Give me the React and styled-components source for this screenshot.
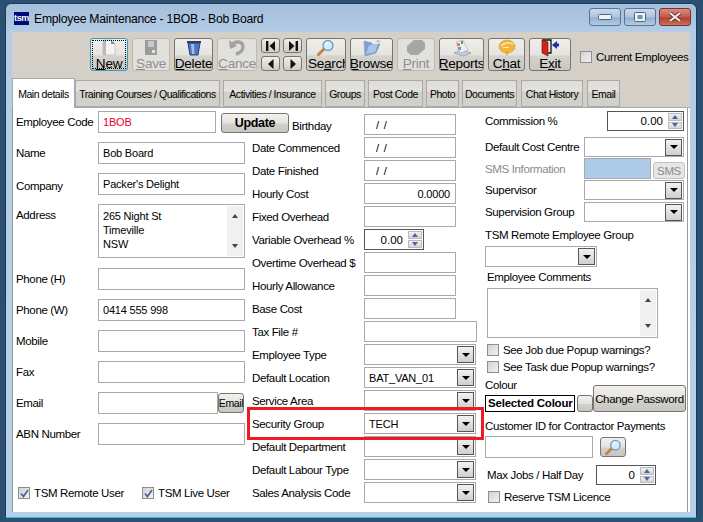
import React from "react";
import styled, { createGlobalStyle } from "styled-components";

const GlobalStyle = createGlobalStyle`
  html, body {
    margin: 0;
    padding: 0;
    background: #2b5072;
    font-family: "Liberation Sans", Arial, sans-serif;
    font-size: 11.5px;
    letter-spacing: -0.35px;
    color: #000;
    overflow: hidden;
  }
`;

const NewIcon = () => (
  <svg width="18" height="17" viewBox="0 0 18 17">
    <path d="M3 1h8l4 4v11H3z" fill="#f4f4f4" stroke="#c4c4c4" />
    <path d="M11 1v4h4z" fill="#8c8c8c" />
    <path d="M3 1h3v15H3z" fill="#b9b9b9" />
  </svg>
);
const SaveIcon = () => (
  <svg width="16" height="17" viewBox="0 0 16 17">
    <path d="M2 1h12v15H2z" fill="#9c9c9c" />
    <path d="M5 2h6v6H5z" fill="#c9c9c9" />
    <path d="M9 11h3v3H9z" fill="#e2e2e2" />
  </svg>
);
const TrashIcon = () => (
  <svg width="16" height="17" viewBox="0 0 16 17">
    <path d="M1 2h14v2H1z" fill="#333f66" />
    <path d="M2 4h12l-2 12H4z" fill="#4d76c4" stroke="#2a3f78" />
    <path d="M5 5h3l.5 10H6z" fill="#9cc0ee" />
  </svg>
);
const UndoIcon = () => (
  <svg width="18" height="17" viewBox="0 0 18 17">
    <path d="M3 7c4-6 12-5 12 1 0 3-3 6-7 7" fill="none" stroke="#a2a2a2" strokeWidth="3.4" />
    <path d="M1 1l1 9 7-3z" fill="#a2a2a2" />
  </svg>
);
const NavIcon = ({ dir, bar }) => (
  <svg width="12" height="12" viewBox="0 0 12 12">
    <g transform={dir === "left" ? "" : "matrix(-1 0 0 1 12 0)"}>
      {bar && <path d="M1 1h2.4v10H1z" fill="#111" />}
      <path d={bar ? "M10 1v10L4.5 6z" : "M8.5 1v10L3 6z"} fill="#111" />
    </g>
  </svg>
);
const SearchIcon = ({ size = 18 }) => (
  <svg width={size} height={size} viewBox="0 0 18 18">
    <path d="M7.5 9.5L1.5 15.5" stroke="#c9803a" strokeWidth="3" strokeLinecap="round" />
    <circle cx="11" cy="6.5" r="5" fill="#d3ecfb" stroke="#6b9ec6" strokeWidth="1.4" />
    <path d="M8.5 6a3 3 0 0 1 2.5-2.6" stroke="#fff" strokeWidth="1.2" fill="none" />
  </svg>
);
const BrowseIcon = () => (
  <svg width="22" height="17" viewBox="0 0 22 17">
    <path d="M3 2l8 2 0 2 8-1-4 9-11 3z" fill="#7f9fd0" stroke="#8d9aae" strokeWidth=".6" />
    <path d="M5 15l3-9 9-1-3 8z" fill="#a9c6ee" />
    <path d="M15 1l5 1-3 2z" fill="#aebccb" />
  </svg>
);
const PrintIcon = () => (
  <svg width="20" height="17" viewBox="0 0 20 17">
    <path d="M1 7l7-6h8l3 3v6l-7 6H5l-4-3z" fill="#a6a6a6" />
  </svg>
);
const ReportsIcon = () => (
  <svg width="20" height="18" viewBox="0 0 20 18">
    <path d="M2 14l8-3 9 3-8 3z" fill="#c9c9d8" stroke="#8a8a9c" strokeWidth=".6" />
    <path d="M4 3l7-2 5 10-8 3z" fill="#e9eef7" stroke="#a5abc0" strokeWidth=".6" />
    <path d="M5 4h3v3H5z" fill="#d88b4a" />
    <path d="M9 2h2v3H9z" fill="#5d9e5a" />
    <path d="M6 8h3v3H6z" fill="#6f94d6" />
  </svg>
);
const ChatIcon = () => (
  <svg width="18" height="18" viewBox="0 0 18 18">
    <ellipse cx="9" cy="7.5" rx="8" ry="6.5" fill="#f0b53a" stroke="#d8962a" strokeWidth=".6" />
    <path d="M7 13l2 4 2-4z" fill="#e6a62f" />
    <path d="M3 7c2-3 8-4 12-2" stroke="#fbe2a0" strokeWidth="1.6" fill="none" />
    <path d="M5 8.5h6" stroke="#fff2c9" strokeWidth="1" />
  </svg>
);
const ExitIcon = () => (
  <svg width="20" height="18" viewBox="0 0 20 18">
    <path d="M2 1h9v13H8" fill="none" stroke="#111" strokeWidth="1.3" />
    <path d="M2 1l6 2v14l-6-3z" fill="#d8201c" stroke="#5a1010" strokeWidth=".6" />
    <path d="M12 6l5-4v2.5h2v3h-2V10z" fill="#1c2fa8" />
  </svg>
);
const CheckMark = () => (
  <svg width="9" height="9" viewBox="0 0 9 9">
    <path d="M1 4.5l2.4 3L8 1" fill="none" stroke="#4a5f9e" strokeWidth="1.7" />
  </svg>
);

const Desktop = styled.div`
  width: 703px;
  height: 522px;
  padding: 3px 0 0 5px;
  box-sizing: border-box;
`;

const Window = styled.div`
  width: 692px;
  height: 515px;
  box-sizing: border-box;
  border: 1px solid #1b3a55;
  border-bottom: 1px solid #21c0e0;
  border-radius: 6px 6px 0 0;
  background: linear-gradient(to bottom, #a3bfdb 0, #b4cce6 28px, #b8d0ea 100%);
  padding: 0 6px 5px 6px;
  display: flex;
  flex-direction: column;
`;

const TitleBar = styled.div`
  height: 28px;
  display: flex;
  align-items: center;
  padding-top: 1px;
  box-sizing: border-box;
`;

const Logo = styled.div`
  width: 15px;
  height: 13px;
  background: #000a78;
  color: #fff;
  font: bold 9px "Liberation Sans", sans-serif;
  line-height: 13px;
  text-align: center;
  margin: 0 5px 0 2px;
  overflow: hidden;
`;

const TitleText = styled.span`
  flex: 1;
  font-size: 12.2px;
  letter-spacing: -0.25px;
`;

const WinControls = styled.div`
  display: flex;
  gap: 3px;
  margin: -4px -1px 0 0;
`;

const WinButton = styled.div`
  width: 30px;
  height: 16px;
  border: 1px solid ${p => (p.$close ? "#7c342a" : "#5a7390")};
  border-radius: 3px;
  display: flex;
  align-items: center;
  justify-content: center;
  background: ${p =>
    p.$close
      ? "linear-gradient(to bottom, #d98a7e 0, #c25a4a 50%, #b2402e 55%, #c9705c 100%)"
      : "linear-gradient(to bottom, #c9daec 0, #aec5de 50%, #94b0ce 55%, #b3cbe4 100%)"};
`;

const Client = styled.div`
  flex: 1;
  display: flex;
  flex-direction: column;
  width: 678px;
`;

const Toolbar = styled.div`
  height: 48px;
  box-sizing: border-box;
  display: flex;
  gap: 4px;
  padding: 6px 0 0 78px;
  background: #d4d0c8;
`;

const ToolButton = styled.div`
  width: ${p => p.$w}px;
  height: 33px;
  box-sizing: border-box;
  flex-shrink: 0;
  border: 1px solid ${p => (p.$focus ? "#3b98bd" : p.$off ? "#bdbab3" : "#77756f")};
  border-radius: 3px;
  background: ${p =>
    p.$off
      ? "#e2e0da"
      : "linear-gradient(to bottom, #efeeea 0, #e6e4df 50%, #d5d3cd 55%, #c9c7c1 100%)"};
  color: ${p => (p.$off ? "#8f8f8f" : "#000")};
  display: flex;
  flex-direction: column;
  align-items: ${p => (p.$clip ? "flex-start" : "center")};
  overflow: hidden;
  font-size: 13.6px;
  letter-spacing: -0.3px;
  line-height: 15px;
  white-space: nowrap;
  outline: ${p => (p.$focus ? "1px dotted #000" : "none")};
  outline-offset: -3px;
`;

const IconSlot = styled.div`
  height: 17px;
  width: 100%;
  display: flex;
  align-items: center;
  justify-content: center;
  flex-shrink: 0;
`;

const ToolLabel = styled.span`
  padding-left: ${p => (p.$clip ? 1 : 0)}px;
`;

const NavGrid = styled.div`
  display: grid;
  grid-template-columns: 19px 19px;
  grid-template-rows: 15px 15px;
  gap: 3px;
  flex-shrink: 0;
`;

const NavButton = styled.div`
  border: 1px solid #77756f;
  border-radius: 3px;
  box-sizing: border-box;
  background: linear-gradient(to bottom, #efeeea, #d0cec8);
  display: flex;
  align-items: center;
  justify-content: center;
`;

const CurrentBox = styled.label`
  display: flex;
  align-items: center;
  gap: 4px;
  margin: 12px 0 0 5px;
  height: 14px;
  white-space: nowrap;
`;

const Tabs = styled.div`
  height: 27px;
  display: flex;
  align-items: flex-end;
  font-size: 10.5px;
  letter-spacing: -0.45px;
  position: relative;
  z-index: 1;
  background: #d4d0c8;
`;

const Tab = styled.div`
  box-sizing: border-box;
  width: ${p => p.$w}px;
  margin-left: ${p => p.$gap || 0}px;
  height: ${p => (p.$active ? 30 : 27)}px;
  margin-bottom: ${p => (p.$active ? -1 : 0)}px;
  border: 1px solid #a9a9a9;
  border-bottom: ${p => (p.$active ? "none" : "1px solid #a9a9a9")};
  background: ${p =>
    p.$active ? "#fff" : "linear-gradient(to bottom, #dedcd6 0, #e4e2dd 40%, #d2d0ca 45%, #d2d0ca 100%)"};
  display: flex;
  align-items: center;
  justify-content: center;
  white-space: nowrap;
`;

const Page = styled.div`
  position: relative;
  flex: 1;
  width: 678px;
  box-sizing: border-box;
  background: linear-gradient(to right, #fff 674px, #9a9a9a 674px, #9a9a9a 675px, #fff 675px);
  border-left: 1px solid #9a9a9a;
  border-top: 1px solid #a9a9a9;
  display: grid;
  grid-template-columns: 236px 233px 1fr;
  padding: 3px 0 0 3px;
  align-items: start;
`;

const LeftColumn = styled.div`
  display: flex;
  flex-direction: column;
  gap: 9px;
`;

const MiddleColumn = styled.div`
  display: flex;
  flex-direction: column;
  gap: 2px;
  padding-top: 3px;
`;

const RightColumn = styled.div`
  display: flex;
  flex-direction: column;
`;

const Row = styled.div`
  display: flex;
  align-items: ${p => (p.$top ? "flex-start" : "center")};
  height: ${p => p.$h}px;
  margin-top: ${p => p.$mt || 0}px;
  flex-shrink: 0;
`;

const Label = styled.div`
  width: ${p => p.$w}px;
  flex-shrink: 0;
  white-space: nowrap;
  padding-left: ${p => p.$indent || 0}px;
  padding-top: ${p => p.$down || 0}px;
  box-sizing: border-box;
  color: ${p => (p.$muted ? "#8a8a8a" : "#000")};
`;

const Caption = styled.div`
  height: 14px;
  line-height: 14px;
  white-space: nowrap;
  margin-top: ${p => p.$mt || 0}px;
  margin-left: ${p => p.$ml || 0}px;
`;

const Field = styled.div`
  width: ${p => p.$w}px;
  height: ${p => p.$h || 22}px;
  box-sizing: border-box;
  flex-shrink: 0;
  border: 1px solid #a9a9a9;
  padding: 0 ${p => (p.$right ? 5 : 4)}px;
  display: flex;
  align-items: center;
  justify-content: ${p => (p.$right ? "flex-end" : "flex-start")};
  color: ${p => p.$color || "#000"};
  background: #fff;
  font-size: 11px;
  letter-spacing: -0.2px;
  white-space: nowrap;
`;

const DateValue = styled.span`
  padding-left: 7px;
  word-spacing: 2px;
`;

const Memo = styled.div`
  width: ${p => p.$w}px;
  height: ${p => p.$h}px;
  box-sizing: border-box;
  border: 1px solid #a9a9a9;
  flex-shrink: 0;
  display: flex;
  justify-content: space-between;
  margin-left: ${p => p.$ml || 0}px;
  margin-top: ${p => p.$mt || 0}px;
  font-size: 11px;
  letter-spacing: -0.2px;
  line-height: 14px;
`;

const MemoText = styled.div`
  padding: 4px;
`;

const Scrollbar = styled.div`
  width: 16px;
  margin: 1px;
  background: #f0f0f0;
  display: flex;
  flex-direction: column;
  justify-content: space-between;
  align-items: center;
  padding: 8px 0;
  box-sizing: border-box;
`;

const Arrow = styled.span`
  width: 0;
  height: 0;
  border-left: 3.5px solid transparent;
  border-right: 3.5px solid transparent;
  ${p => (p.$up ? "border-bottom" : "border-top")}: 4px solid #444;
`;

const ComboBox = styled.div`
  width: ${p => p.$w}px;
  height: ${p => p.$h || 21}px;
  box-sizing: border-box;
  border: 1px solid #a9a9a9;
  flex-shrink: 0;
  display: flex;
  align-items: center;
  justify-content: space-between;
  padding: 0 1px 0 4px;
  font-size: 11px;
  letter-spacing: -0.2px;
  background: #fff;
`;

const ComboArrow = styled.div`
  width: 17px;
  height: 17px;
  box-sizing: border-box;
  border: 1px solid #555;
  background: linear-gradient(to bottom, #f2f2f2, #cfcfcf);
  display: flex;
  align-items: center;
  justify-content: center;
`;

const ComboTriangle = styled.span`
  width: 0;
  height: 0;
  border-left: 4px solid transparent;
  border-right: 4px solid transparent;
  border-top: 4px solid #000;
`;

const Spin = styled.div`
  width: ${p => p.$w}px;
  height: ${p => p.$h || 21}px;
  box-sizing: border-box;
  border: 1px solid #555;
  flex-shrink: 0;
  display: flex;
  justify-content: flex-end;
  align-items: center;
  padding-left: 4px;
  font-size: 11.5px;
  letter-spacing: 0;
`;

const SpinValue = styled.span`
  margin-right: 5px;
`;

const SpinButtons = styled.div`
  width: 14px;
  align-self: stretch;
  margin: 1px 1px 1px 0;
  display: flex;
  flex-direction: column;
  gap: 1px;
`;

const SpinButton = styled.div`
  flex: 1;
  background: linear-gradient(to bottom, #f0f0f0, #d6d6d6);
  border: 1px solid #bbb;
  display: flex;
  align-items: center;
  justify-content: center;
`;

const SpinArrow = styled.span`
  width: 0;
  height: 0;
  border-left: 3.5px solid transparent;
  border-right: 3.5px solid transparent;
  ${p => (p.$up ? "border-bottom" : "border-top")}: 4px solid #4a64a8;
`;

const Button = styled.div`
  width: ${p => p.$w}px;
  height: ${p => p.$h}px;
  box-sizing: border-box;
  flex-shrink: 0;
  margin-left: ${p => p.$ml || 0}px;
  margin-top: ${p => p.$mt || 0}px;
  border: 1px solid ${p => (p.$off ? "#c2c2c2" : "#77756f")};
  border-radius: 3px;
  background: ${p =>
    p.$off ? "#e6e6e6" : "linear-gradient(to bottom, #f2f1ed 0, #e4e2dd 50%, #d2d0ca 55%, #c8c6c0 100%)"};
  color: ${p => (p.$off ? "#8a8a8a" : "#000")};
  font-size: ${p => p.$size || 11.5}px;
  font-weight: ${p => (p.$bold ? "bold" : "normal")};
  display: flex;
  align-items: center;
  justify-content: center;
  white-space: nowrap;
`;

const Box = styled.span`
  width: 12px;
  height: 12px;
  box-sizing: border-box;
  flex-shrink: 0;
  border: 1px solid #8e8e8e;
  background: linear-gradient(135deg, #d2d2d2, #f2f2f2);
  display: flex;
  align-items: center;
  justify-content: center;
`;

const CheckRow = styled.label`
  display: flex;
  align-items: center;
  gap: 4px;
  white-space: nowrap;
  height: 12px;
  margin-top: ${p => p.$mt || 0}px;
  margin-left: ${p => p.$ml || 0}px;
  width: ${p => p.$w || "auto"};
`;

const ChecksLine = styled.div`
  display: flex;
  margin-top: 33px;
  padding-left: 2px;
`;

const SmsBox = styled.div`
  width: 67px;
  height: 21px;
  background: #aecbe9;
  border: 1px solid #a9a9a9;
  box-sizing: border-box;
  flex-shrink: 0;
`;

const ColourRow = styled.div`
  display: flex;
  align-items: flex-end;
  margin-top: 5px;
  height: 34px;
`;

const ColourColumn = styled.div`
  display: flex;
  flex-direction: column;
  width: 108px;
`;

const ColourPick = styled.div`
  display: flex;
  align-items: center;
  height: 17px;
  margin-top: 3px;
`;

const SelectedColour = styled.div`
  width: 90px;
  height: 17px;
  box-sizing: border-box;
  border: 1px solid #000;
  font-weight: bold;
  letter-spacing: -0.2px;
  line-height: 15px;
  padding-left: 2px;
  white-space: nowrap;
  overflow: hidden;
`;

const Highlight = styled.div`
  position: absolute;
  left: 234px;
  top: 299px;
  width: 237px;
  height: 33px;
  box-sizing: border-box;
  border: 3px solid #ed1c24;
  pointer-events: none;
`;

const Combo = ({ w, h, children }) => (
  <ComboBox $w={w} $h={h}>
    <span>{children}</span>
    <ComboArrow>
      <ComboTriangle />
    </ComboArrow>
  </ComboBox>
);

const Spinner = ({ w, h, value }) => (
  <Spin $w={w} $h={h}>
    <SpinValue>{value}</SpinValue>
    <SpinButtons>
      <SpinButton>
        <SpinArrow $up />
      </SpinButton>
      <SpinButton>
        <SpinArrow />
      </SpinButton>
    </SpinButtons>
  </Spin>
);

const Check = ({ checked, label, ...rest }) => (
  <CheckRow {...rest}>
    <Box>{checked && <CheckMark />}</Box>
    {label}
  </CheckRow>
);

const tools = [
  { id: "new", w: 38, focus: true, icon: <NewIcon />, label: <><u>N</u>ew</> },
  { id: "save", w: 38, off: true, icon: <SaveIcon />, label: <><u>S</u>ave</> },
  { id: "delete", w: 39, icon: <TrashIcon />, label: <><u>D</u>elete</> },
  { id: "cancel", w: 40, off: true, icon: <UndoIcon />, label: <><u>C</u>ance</> },
];

const tools2 = [
  { id: "search", w: 40, clip: true, icon: <SearchIcon />, label: <>Se<u>a</u>rch</> },
  { id: "browse", w: 43, icon: <BrowseIcon />, label: <><u>B</u>rowse</> },
  { id: "print", w: 38, off: true, icon: <PrintIcon />, label: <><u>P</u>rint</> },
  { id: "reports", w: 45, icon: <ReportsIcon />, label: <><u>R</u>eports</> },
  { id: "chat", w: 37, icon: <ChatIcon />, label: <>C<u>h</u>at</> },
  { id: "exit", w: 42, icon: <ExitIcon />, label: <>E<u>x</u>it</> },
];

const tabs = [
  { w: 63, name: "Main details", active: true },
  { w: 145, name: "Training Courses / Qualifications" },
  { w: 99, gap: 3, name: "Activities / Insurance" },
  { w: 40, gap: 3, name: "Groups" },
  { w: 55, gap: 3, name: "Post Code" },
  { w: 33, gap: 3, name: "Photo" },
  { w: 55, gap: 3, name: "Documents" },
  { w: 62, gap: 4, name: "Chat History" },
  { w: 33, gap: 4, name: "Email" },
];

const renderTool = t => (
  <ToolButton key={t.id} $w={t.w} $off={t.off} $focus={t.focus} $clip={t.clip}>
    <IconSlot>{t.icon}</IconSlot>
    <ToolLabel $clip={t.clip}>{t.label}</ToolLabel>
  </ToolButton>
);

export default function App() {
  return (
    <Desktop>
      <GlobalStyle />
      <Window>
        <TitleBar>
          <Logo>tsm</Logo>
          <TitleText>Employee Maintenance - 1BOB - Bob Board</TitleText>
          <WinControls>
            <WinButton>
              <svg width="14" height="6" viewBox="0 0 14 6">
                <rect x=".5" y=".5" width="13" height="5" rx="1" fill="#eef3f8" stroke="#4d6580" />
              </svg>
            </WinButton>
            <WinButton>
              <svg width="12" height="10" viewBox="0 0 12 10">
                <rect x=".5" y=".5" width="11" height="9" rx="1" fill="#eef3f8" stroke="#4d6580" />
                <rect x="3.5" y="3" width="5" height="4" fill="#7d93ab" />
              </svg>
            </WinButton>
            <WinButton $close>
              <svg width="16" height="10" viewBox="0 0 16 10">
                <path d="M3 1l10 8M13 1L3 9" stroke="#5e2a22" strokeWidth="3.6" />
                <path d="M3 1l10 8M13 1L3 9" stroke="#f3ecea" strokeWidth="2.2" />
              </svg>
            </WinButton>
          </WinControls>
        </TitleBar>
        <Client>
          <Toolbar>
            {tools.map(renderTool)}
            <NavGrid>
              <NavButton><NavIcon dir="left" bar /></NavButton>
              <NavButton><NavIcon dir="right" bar /></NavButton>
              <NavButton><NavIcon dir="left" /></NavButton>
              <NavButton><NavIcon dir="right" /></NavButton>
            </NavGrid>
            {tools2.map(renderTool)}
            <CurrentBox>
              <Box />
              Current Employees
            </CurrentBox>
          </Toolbar>
          <Tabs>
            {tabs.map(t => (
              <Tab key={t.name} $w={t.w} $gap={t.gap} $active={t.active}>
                {t.name}
              </Tab>
            ))}
          </Tabs>
          <Page>
            <LeftColumn>
              <Row $h={22}>
                <Label $w={82}>Employee Code</Label>
                <Field $w={118} $color="#e8002a">1BOB</Field>
                <Button $w={68} $h={20} $ml={5} $mt={2} $bold $size={12.5}>Update</Button>
              </Row>
              <Row $h={22}>
                <Label $w={82}>Name</Label>
                <Field $w={147}>Bob Board</Field>
              </Row>
              <Row $h={22}>
                <Label $w={82} $down={4}>Company</Label>
                <Field $w={147}>Packer's Delight</Field>
              </Row>
              <Row $h={54} $top>
                <Label $w={82} $down={5}>Address</Label>
                <Memo $w={147} $h={54}>
                  <MemoText>
                    265 Night St
                    <br />
                    Timeville
                    <br />
                    NSW
                  </MemoText>
                  <Scrollbar>
                    <Arrow $up />
                    <Arrow />
                  </Scrollbar>
                </Memo>
              </Row>
              <Row $h={22} $mt={1}>
                <Label $w={82}>Phone (H)</Label>
                <Field $w={147} />
              </Row>
              <Row $h={22}>
                <Label $w={82}>Phone (W)</Label>
                <Field $w={147}>0414 555 998</Field>
              </Row>
              <Row $h={22}>
                <Label $w={82}>Mobile</Label>
                <Field $w={147} />
              </Row>
              <Row $h={22}>
                <Label $w={82}>Fax</Label>
                <Field $w={147} />
              </Row>
              <Row $h={22}>
                <Label $w={82}>Email</Label>
                <Field $w={120} />
                <Button $w={26} $h={20} $size={10.5}>Email</Button>
              </Row>
              <Row $h={22}>
                <Label $w={82}>ABN Number</Label>
                <Field $w={147} />
              </Row>
              <ChecksLine>
                <Check checked label="TSM Remote User" $w="124px" />
                <Check checked label="TSM Live User" />
              </ChecksLine>
            </LeftColumn>

            <MiddleColumn>
              <Row $h={21}>
                <Label $w={112} $indent={40} $down={2}>Birthday</Label>
                <Field $w={92} $h={21}><DateValue>/ /</DateValue></Field>
              </Row>
              <Row $h={21}>
                <Label $w={112}>Date Commenced</Label>
                <Field $w={92} $h={21}><DateValue>/ /</DateValue></Field>
              </Row>
              <Row $h={21}>
                <Label $w={112}>Date Finished</Label>
                <Field $w={92} $h={21}><DateValue>/ /</DateValue></Field>
              </Row>
              <Row $h={21}>
                <Label $w={112}>Hourly Cost</Label>
                <Field $w={92} $h={21} $right>0.0000</Field>
              </Row>
              <Row $h={21}>
                <Label $w={112}>Fixed Overhead</Label>
                <Field $w={92} $h={21} />
              </Row>
              <Row $h={21}>
                <Label $w={112}>Variable Overhead %</Label>
                <Spinner w={60} value="0.00" />
              </Row>
              <Row $h={21}>
                <Label $w={112}>Overtime Overhead $</Label>
                <Field $w={92} $h={21} />
              </Row>
              <Row $h={21}>
                <Label $w={112}>Hourly Allowance</Label>
                <Field $w={92} $h={21} />
              </Row>
              <Row $h={21}>
                <Label $w={112}>Base Cost</Label>
                <Field $w={92} $h={21} />
              </Row>
              <Row $h={21}>
                <Label $w={112}>Tax File #</Label>
                <Field $w={113} $h={21} />
              </Row>
              <Row $h={21}>
                <Label $w={112}>Employee Type</Label>
                <Combo w={112} />
              </Row>
              <Row $h={21}>
                <Label $w={112}>Default Location</Label>
                <Combo w={112}>BAT_VAN_01</Combo>
              </Row>
              <Row $h={21}>
                <Label $w={112}>Service Area</Label>
                <Combo w={112} />
              </Row>
              <Row $h={21}>
                <Label $w={112}>Security Group</Label>
                <Combo w={112}>TECH</Combo>
              </Row>
              <Row $h={21}>
                <Label $w={112}>Default Department</Label>
                <Combo w={112} />
              </Row>
              <Row $h={21}>
                <Label $w={112}>Default Labour Type</Label>
                <Combo w={112} />
              </Row>
              <Row $h={21}>
                <Label $w={112}>Sales Analysis Code</Label>
                <Combo w={112} />
              </Row>
            </MiddleColumn>

            <RightColumn>
              <Row $h={20}>
                <Label $w={122}>Commission %</Label>
                <Spinner w={77} h={20} value="0.00" />
              </Row>
              <Row $h={20} $mt={6}>
                <Label $w={99}>Default Cost Centre</Label>
                <Combo w={100} h={20} />
              </Row>
              <Row $h={21} $mt={1}>
                <Label $w={99} $muted>SMS Information</Label>
                <SmsBox />
                <Button $w={32} $h={17} $ml={2} $mt={4} $off>SMS</Button>
              </Row>
              <Row $h={20} $mt={1}>
                <Label $w={99}>Supervisor</Label>
                <Combo w={100} h={20} />
              </Row>
              <Row $h={20} $mt={2}>
                <Label $w={99}>Supervision Group</Label>
                <Combo w={100} h={20} />
              </Row>
              <Caption $mt={6}>TSM Remote Employee Group</Caption>
              <Row $h={21} $mt={4}>
                <Combo w={112} />
              </Row>
              <Caption $mt={3} $ml={2}>Employee Comments</Caption>
              <Memo $w={171} $h={50} $ml={2} $mt={4}>
                <span />
                <Scrollbar>
                  <Arrow $up />
                  <Arrow />
                </Scrollbar>
              </Memo>
              <Check label="See Job due Popup warnings?" $mt={6} $ml={2} />
              <Check label="See Task due Popup warnings?" $mt={5} $ml={2} />
              <ColourRow>
                <ColourColumn>
                  <Caption>Colour</Caption>
                  <ColourPick>
                    <SelectedColour>Selected Colour</SelectedColour>
                    <Button $w={16} $h={17} $ml={2} />
                  </ColourPick>
                </ColourColumn>
                <Button $w={93} $h={27}>Change Password</Button>
              </ColourRow>
              <Caption $mt={7}>Customer ID for Contractor Payments</Caption>
              <Row $h={22} $mt={3}>
                <Field $w={108} />
                <Button $w={26} $h={20} $ml={7}>
                  <SearchIcon size={17} />
                </Button>
              </Row>
              <Row $h={20} $mt={7}>
                <Label $w={111} $indent={2}>Max Jobs / Half Day</Label>
                <Spinner w={60} h={20} value="0" />
              </Row>
              <Check label="Reserve TSM Licence" $mt={6} $ml={3} />
            </RightColumn>
            <Highlight />
          </Page>
        </Client>
      </Window>
    </Desktop>
  );
}
